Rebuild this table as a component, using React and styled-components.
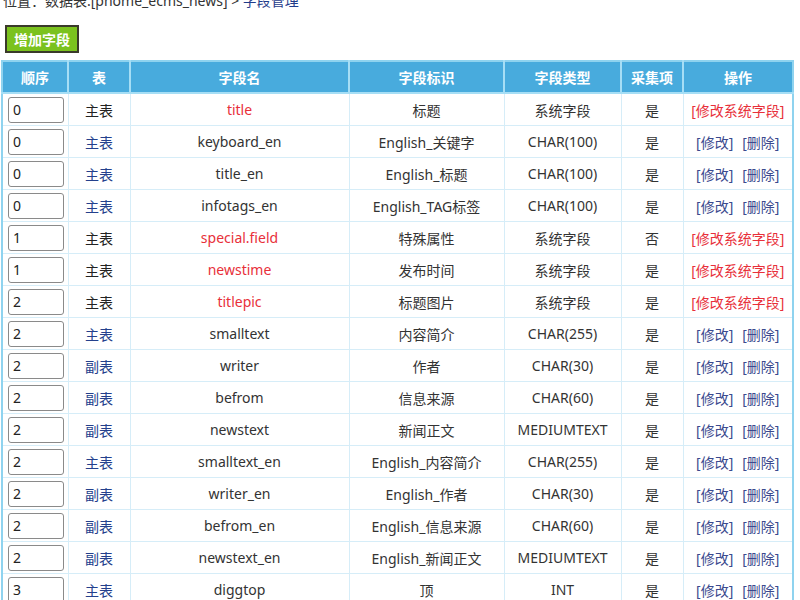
import React from "react";
import styled, { createGlobalStyle } from "styled-components";

const GlobalStyle = createGlobalStyle`
  body {
    margin: 0;
    background: #fff;
    font-family: "Noto Sans", "Noto Sans CJK SC", sans-serif;
    font-size: 14px;
    color: #222;
  }
`;

const fields = [
  { order: 0, main: true, name: "title", label: "标题", type: "系统字段", collect: "是", sys: true },
  { order: 0, main: true, name: "keyboard_en", label: "English_关键字", type: "CHAR(100)", collect: "是" },
  { order: 0, main: true, name: "title_en", label: "English_标题", type: "CHAR(100)", collect: "是" },
  { order: 0, main: true, name: "infotags_en", label: "English_TAG标签", type: "CHAR(100)", collect: "是" },
  { order: 1, main: true, name: "special.field", label: "特殊属性", type: "系统字段", collect: "否", sys: true },
  { order: 1, main: true, name: "newstime", label: "发布时间", type: "系统字段", collect: "是", sys: true },
  { order: 2, main: true, name: "titlepic", label: "标题图片", type: "系统字段", collect: "是", sys: true },
  { order: 2, main: true, name: "smalltext", label: "内容简介", type: "CHAR(255)", collect: "是" },
  { order: 2, main: false, name: "writer", label: "作者", type: "CHAR(30)", collect: "是" },
  { order: 2, main: false, name: "befrom", label: "信息来源", type: "CHAR(60)", collect: "是" },
  { order: 2, main: false, name: "newstext", label: "新闻正文", type: "MEDIUMTEXT", collect: "是" },
  { order: 2, main: true, name: "smalltext_en", label: "English_内容简介", type: "CHAR(255)", collect: "是" },
  { order: 2, main: false, name: "writer_en", label: "English_作者", type: "CHAR(30)", collect: "是" },
  { order: 2, main: false, name: "befrom_en", label: "English_信息来源", type: "CHAR(60)", collect: "是" },
  { order: 2, main: false, name: "newstext_en", label: "English_新闻正文", type: "MEDIUMTEXT", collect: "是" },
  { order: 3, main: true, name: "diggtop", label: "顶", type: "INT", collect: "是" },
];

const columns = [
  { title: "顺序", width: 66 },
  { title: "表", width: 62 },
  { title: "字段名", width: 219 },
  { title: "字段标识", width: 155 },
  { title: "字段类型", width: 117 },
  { title: "采集项", width: 62 },
  { title: "操作", width: 110 },
];

const App = () => {
  return (
    <Page>
      <GlobalStyle />
      <Crumb>
        位置：数据表:[phome_ecms_news] &gt; <a href="#">字段管理</a>
      </Crumb>

      <Toolbar>
        <AddButton>增加字段</AddButton>
      </Toolbar>

      <Grid>
        <colgroup>
          {columns.map((c) => (
            <col key={c.title} style={{ width: c.width }} />
          ))}
        </colgroup>
        <thead>
          <tr>
            {columns.map((c) => (
              <Th key={c.title}>{c.title}</Th>
            ))}
          </tr>
        </thead>
        <tbody>
          {fields.map((f) => (
            <tr key={f.name}>
              <Td>
                <OrderInput defaultValue={f.order} />
              </Td>
              <Td>
                <TableName $link={!f.sys}>{f.main ? "主表" : "副表"}</TableName>
              </Td>
              <Td>
                <FieldName $sys={f.sys}>{f.name}</FieldName>
              </Td>
              <Td>{f.label}</Td>
              <Td>{f.type}</Td>
              <Td>{f.collect}</Td>
              <Td>
                {f.sys ? (
                  <Action $sys>[修改系统字段]</Action>
                ) : (
                  <Actions>
                    <Action>[修改]</Action>
                    <Action>[删除]</Action>
                  </Actions>
                )}
              </Td>
            </tr>
          ))}
        </tbody>
      </Grid>
    </Page>
  );
};

export default App;

const Page = styled.div`
  padding: 0 0 0 1px;
  width: 792px;
`;

const Crumb = styled.div`
  margin-top: -9px;
  padding-left: 2px;
  height: 20px;
  line-height: 20px;
  color: #333;

  a {
    color: #1f3c8a;
    text-decoration: none;
  }
`;

const Toolbar = styled.div`
  padding: 14px 0 7px 4px;
`;

const AddButton = styled.button`
  display: block;
  width: 74px;
  height: 28px;
  padding: 0;
  background: #7bc21e;
  border: 2px solid #3a3a2a;
  color: #fff;
  font-family: inherit;
  font-size: 14px;
  font-weight: bold;
  cursor: pointer;
`;

const Grid = styled.table`
  width: 791px;
  table-layout: fixed;
  border-collapse: collapse;
  border: 2px solid #8fd3ef;
`;

const Th = styled.th`
  height: 30px;
  padding: 0;
  background: #48abdd;
  color: #fff;
  font-weight: bold;
  font-size: 14px;
  border-left: 2px solid #a6def5;
  border-bottom: 2px solid #a6def5;
  &:first-child {
    border-left: none;
  }
`;

const Td = styled.td`
  height: 31px;
  padding: 0;
  text-align: center;
  color: #333;
  border-left: 1px solid #d6edf8;
  border-bottom: 1px solid #d6edf8;
  white-space: nowrap;
  &:first-child {
    text-align: left;
    padding-left: 5px;
    border-left: none;
  }
`;

const OrderInput = styled.input`
  box-sizing: border-box;
  width: 56px;
  height: 26px;
  padding: 0 4px;
  border: 1px solid #8a8a8a;
  border-radius: 3px;
  font-family: inherit;
  font-size: 14px;
  color: #222;
  vertical-align: middle;
`;

const TableName = styled.span`
  color: ${(p) => (p.$link ? "#24408c" : "#222")};
`;

const FieldName = styled.span`
  color: ${(p) => (p.$sys ? "#e8303a" : "#333")};
`;

const Actions = styled.span`
  display: inline-flex;
  gap: 9px;
`;

const Action = styled.a`
  color: ${(p) => (p.$sys ? "#e8303a" : "#3b4a8e")};
  text-decoration: none;
  cursor: pointer;
`;
